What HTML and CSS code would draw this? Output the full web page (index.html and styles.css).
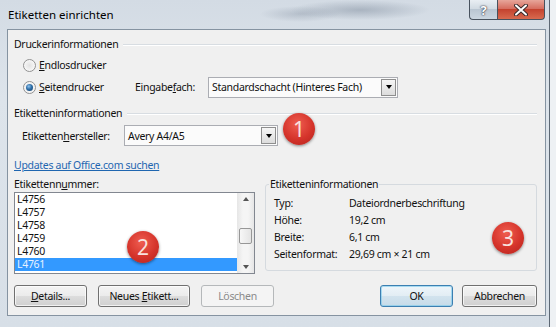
FILE: index.html
```html
<!DOCTYPE html>
<html lang="de">
<head>
    <meta charset="UTF-8">
    <title>Etiketten einrichten</title>
    <link rel="stylesheet" href="styles.css">
</head>
<body>
    <div class="window">
        <div class="titlebar">
            <span class="title">Etiketten einrichten</span>
            <div class="caption">
                <span class="cap-btn help">?</span>
                <span class="cap-btn close">
                    <svg width="14" height="12" viewBox="0 0 14 12">
                        <path d="M2 1.5 L12 10.5 M12 1.5 L2 10.5" stroke="#3a2a2a" stroke-width="4" stroke-linecap="round"/>
                        <path d="M2 1.5 L12 10.5 M12 1.5 L2 10.5" stroke="#fff" stroke-width="2" stroke-linecap="round"/>
                    </svg>
                </span>
            </div>
        </div>

        <div class="client">
            <div class="group-head"><span>Druckerinformationen</span></div>
            <div class="option">
                <span class="radio"></span>
                <span><u>E</u>ndlosdrucker</span>
            </div>
            <div class="option">
                <span class="radio checked"></span>
                <span class="radio-label"><u>S</u>eitendrucker</span>
                <span class="tray-label">Eingabe<u>f</u>ach:</span>
                <div class="combo tray">
                    <span class="combo-text">Standardschacht (Hinteres Fach)</span>
                    <span class="combo-btn"></span>
                </div>
            </div>

            <div class="group-head second"><span>Etiketteninformationen</span></div>
            <div class="vendor-row">
                <span class="vendor-label">Etiketten<u>h</u>ersteller:</span>
                <div class="combo vendor">
                    <span class="combo-text">Avery A4/A5</span>
                    <span class="combo-btn"></span>
                </div>
            </div>

            <a class="update-link" href="#">Updates auf Office.com suchen</a>

            <div class="columns">
                <div class="numbers">
                    <div class="list-label">Etikettenn<u>u</u>mmer:</div>
                    <div class="listbox">
                        <div class="items">
                            <div class="item">L4756</div>
                            <div class="item">L4757</div>
                            <div class="item">L4758</div>
                            <div class="item">L4759</div>
                            <div class="item">L4760</div>
                            <div class="item selected">L4761</div>
                        </div>
                        <div class="scrollbar">
                            <span class="sb-arrow up"></span>
                            <span class="thumb"></span>
                            <span class="sb-space"></span>
                            <span class="sb-arrow down"></span>
                        </div>
                    </div>
                </div>

                <fieldset class="info">
                    <legend>Etiketteninformationen</legend>
                    <div class="info-grid">
                        <span>Typ:</span><span>Dateiordnerbeschriftung</span>
                        <span>Höhe:</span><span>19,2 cm</span>
                        <span>Breite:</span><span>6,1 cm</span>
                        <span>Seitenformat:</span><span>29,69 cm × 21 cm</span>
                    </div>
                </fieldset>
            </div>

            <div class="buttons">
                <button class="btn"><u>D</u>etails...</button>
                <button class="btn wide">Neues <u>E</u>tikett...</button>
                <button class="btn" disabled>Löschen</button>
                <button class="btn ok">OK</button>
                <button class="btn cancel">Abbrechen</button>
            </div>
        </div>

        <span class="badge badge-1">1</span>
        <span class="badge badge-2">2</span>
        <span class="badge badge-3">3</span>
    </div>
</body>
</html>
```

FILE: styles.css
```css
* {
    margin: 0;
    padding: 0;
    box-sizing: border-box;
}

body {
    width: 556px;
    height: 327px;
    overflow: hidden;
    background: #eef1f4;
    font-family: 'Noto Sans', 'Open Sans', sans-serif;
    font-size: 10.5px;
    letter-spacing: -0.3px;
    color: #111;
}

.window {
    position: relative;
    width: 550px;
    height: 327px;
    border-right: 1px solid #5d6874;
    background:
        radial-gradient(ellipse 70px 10px at 360px 10px, rgba(90, 105, 125, 0.35), transparent),
        radial-gradient(ellipse 40px 8px at 300px 14px, rgba(90, 105, 125, 0.25), transparent),
        linear-gradient(180deg, #d3dbe4 0%, #dde4eb 30%, #d7dfe7 100%);
}

/* Titelleiste */
.titlebar {
    height: 29px;
    display: flex;
    align-items: center;
    justify-content: space-between;
    padding-left: 8px;
}

.title {
    font-size: 11.5px;
    letter-spacing: 0;
    color: #000;
}

.caption {
    align-self: flex-start;
    display: flex;
    margin-right: 4px;
}

.cap-btn {
    height: 20px;
    display: flex;
    align-items: center;
    justify-content: center;
    border: 1px solid #48525e;
    border-top: none;
}

.help {
    width: 28px;
    border-right: none;
    border-radius: 0 0 0 4px;
    background: linear-gradient(180deg, #e9eef3 0%, #d2dbe3 45%, #bac6d2 50%, #cbd6e0 100%);
    color: #fff;
    font-size: 13px;
    font-weight: bold;
    text-shadow: 0 0 2px #334, 0 0 1px #223;
}

.close {
    width: 48px;
    border-radius: 0 0 4px 0;
    background: linear-gradient(180deg, #e7a69a 0%, #d66e60 45%, #c4432f 50%, #d86a4f 100%);
}

/* Dialogbereich */
.client {
    margin-left: 7px;
    width: 539px;
    height: 287px;
    background: #f0f0f0;
    border: 1px solid #8593a1;
    padding: 6px 8px 0 6px;
}

.group-head {
    display: flex;
    align-items: center;
    height: 16px;
    margin-bottom: 2px;
}

.group-head::after {
    content: "";
    flex: 1;
    height: 1px;
    margin-left: 5px;
    background: #d8dde2;
    box-shadow: 0 1px 0 #fff;
}

.group-head.second {
    margin-top: 7px;
    margin-bottom: 0;
}

.option {
    display: flex;
    align-items: center;
    height: 22px;
    padding-left: 9px;
}

.radio {
    position: relative;
    width: 13px;
    height: 13px;
    margin-right: 3px;
    border-radius: 50%;
    border: 1px solid #929292;
    background: radial-gradient(circle at 50% 50%, #e2e2e2 0%, #f4f4f4 60%, #fff 100%);
}

.radio.checked::after {
    content: "";
    position: absolute;
    left: 2px;
    top: 2px;
    width: 7px;
    height: 7px;
    border-radius: 50%;
    background: radial-gradient(circle at 40% 35%, #8fc3ee 0%, #2f6fa8 45%, #123c66 100%);
}

.radio-label {
    width: 96px;
}

.tray-label {
    width: 73px;
}

.combo {
    display: flex;
    align-items: center;
    height: 21px;
    padding: 0 1px 0 3px;
    border: 1px solid #abadb3;
    background: #fbfbfb;
}

.combo-text {
    flex: 1;
}

.combo.tray {
    width: 190px;
}

.combo.vendor {
    width: 154px;
}

.combo-btn {
    width: 15px;
    height: 17px;
    display: flex;
    align-items: center;
    justify-content: center;
    border: 1px solid #8e8e8e;
    background: linear-gradient(180deg, #f6f6f6, #dcdcdc);
}

.combo-btn::before {
    content: "";
    border-left: 3.5px solid transparent;
    border-right: 3.5px solid transparent;
    border-top: 4px solid #000;
}

.vendor-row {
    display: flex;
    align-items: center;
    height: 21px;
    margin-top: 4px;
    padding-left: 8px;
}

.vendor-label {
    width: 102px;
}

.update-link {
    display: block;
    width: max-content;
    height: 16px;
    line-height: 16px;
    margin-top: 11px;
    color: #1f66b0;
}

/* Nummernliste und Info */
.columns {
    display: flex;
    gap: 10px;
}

.numbers {
    width: 241px;
}

.list-label {
    height: 16px;
    line-height: 16px;
    margin-top: 3px;
}

.listbox {
    display: flex;
    height: 82px;
    border: 1px solid #828790;
    background: #fff;
}

.items {
    flex: 1;
}

.item {
    height: 13px;
    line-height: 13px;
    padding-left: 2px;
}

.item.selected {
    background: #3399ff;
    color: #e8f2ff;
}

.scrollbar {
    width: 17px;
    display: flex;
    flex-direction: column;
    align-items: center;
    background: linear-gradient(90deg, #e6e6e6, #f5f5f5 35%, #f5f5f5 65%, #e6e6e6);
}

.sb-arrow {
    height: 12px;
    width: 100%;
    display: flex;
    align-items: center;
    justify-content: center;
}

.sb-arrow.up::before {
    content: "";
    border-left: 3.5px solid transparent;
    border-right: 3.5px solid transparent;
    border-bottom: 4px solid #555;
}

.sb-arrow.down::before {
    content: "";
    border-left: 3.5px solid transparent;
    border-right: 3.5px solid transparent;
    border-top: 4px solid #555;
}

.thumb {
    width: 13px;
    height: 16px;
    margin-top: 23px;
    border: 1px solid #979797;
    border-radius: 2px;
    background: linear-gradient(90deg, #f7f7f7, #e4e4e4);
}

.sb-space {
    flex: 1;
}

.info {
    width: 272px;
    height: 95px;
    margin-top: 3px;
    padding: 2px 8px 0 8px;
    border: 1px solid #d5dadf;
    border-radius: 3px;
}

.info legend {
    margin-left: -5px;
    padding: 0 1px;
    line-height: 16px;
}

.info-grid {
    display: grid;
    grid-template-columns: 75px 1fr;
    grid-auto-rows: 17px;
    align-items: center;
}

/* Schaltflächen */
.buttons {
    display: flex;
    margin-top: 11px;
}

.btn {
    width: 73px;
    height: 22px;
    font: inherit;
    letter-spacing: inherit;
    color: #111;
    border: 1px solid #707070;
    border-radius: 3px;
    background: linear-gradient(180deg, #f4f4f4 0%, #ebebeb 50%, #dddddd 51%, #cfcfcf 100%);
    box-shadow: inset 0 0 0 1px rgba(255, 255, 255, 0.7);
}

.btn + .btn {
    margin-left: 11px;
}

.btn.wide {
    width: 92px;
}

.btn:disabled {
    color: #8a8a8a;
    border-color: #b5b8ba;
    background: #f4f4f4;
    box-shadow: none;
}

.btn.ok {
    margin-left: auto;
    border-color: #3c7fb1;
    background: linear-gradient(180deg, #eef5fa 0%, #e2edf4 50%, #d2e3ee 51%, #c6dbe9 100%);
    box-shadow: inset 0 0 0 1px rgba(120, 200, 235, 0.6);
}

.btn.cancel {
    width: 75px;
    margin-left: 9px;
}

/* Markierungen */
.badge {
    position: absolute;
    width: 32px;
    height: 32px;
    border-radius: 50%;
    display: flex;
    align-items: center;
    justify-content: center;
    color: #f8e2df;
    font-size: 21px;
    letter-spacing: 0;
    background: radial-gradient(circle at 45% 35%, #ef5d50 0%, #d5342b 55%, #b3221d 100%);
    box-shadow: 0 1px 3px rgba(0, 0, 0, 0.45);
}

.badge-1 {
    left: 283px;
    top: 113px;
}

.badge-2 {
    left: 127px;
    top: 231px;
}

.badge-3 {
    left: 492px;
    top: 222px;
}
```
